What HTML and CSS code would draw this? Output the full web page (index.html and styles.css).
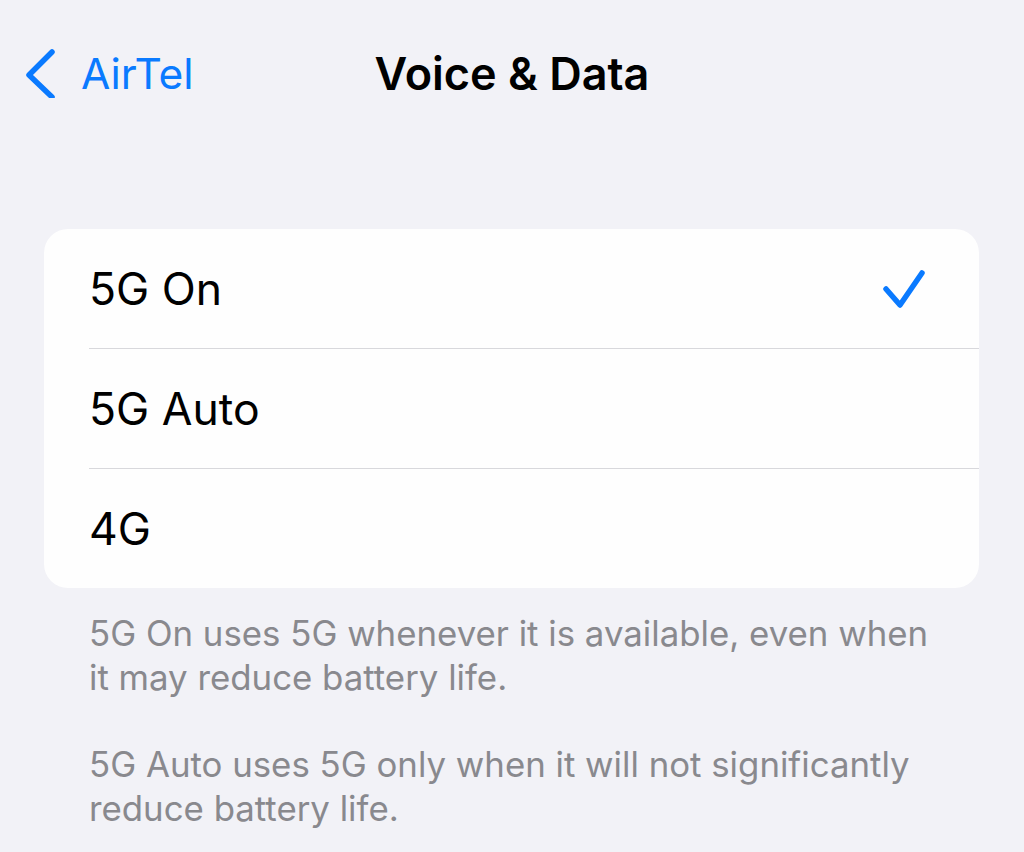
FILE: index.html
```html
<!DOCTYPE html>
<html lang="en">
<head>
    <meta charset="UTF-8">
    <meta name="viewport" content="width=device-width, initial-scale=1.0">
    <title>Voice &amp; Data</title>
    <link rel="stylesheet" href="styles.css">
</head>
<body>

    <div class="nav-bar">
        <a class="back-link" href="#">
            <svg class="back-chevron" width="34" height="50" viewBox="0 0 34 50">
                <path d="M28 4 L5 27 L28 49" fill="none" stroke="#0a7aff" stroke-width="5.5" stroke-linecap="round" stroke-linejoin="round"/>
            </svg>
            <span>AirTel</span>
        </a>
        <h1 class="nav-title">Voice &amp; Data</h1>
        <div></div>
    </div>

    <div class="settings-group">
        <div class="settings-row">
            <span>5G On</span>
            <svg class="check-mark" width="46" height="42" viewBox="0 0 46 42">
                <path d="M5 21 L19 37 L41 5" fill="none" stroke="#0a7aff" stroke-width="5.5" stroke-linecap="round" stroke-linejoin="round"/>
            </svg>
        </div>
        <div class="settings-row">
            <span>5G Auto</span>
        </div>
        <div class="settings-row">
            <span>4G</span>
        </div>
    </div>

    <div class="group-footer">
        <p>5G On uses 5G whenever it is available, even when it may reduce battery life.</p>
        <p>5G Auto uses 5G only when it will not significantly reduce battery life.</p>
    </div>

</body>
</html>
```

FILE: styles.css
```css
body {
    font-family: 'Inter', 'Liberation Sans', sans-serif;
    background-color: #f2f2f7;
    margin: 0;
    padding: 0;
    color: #000;
}

.nav-bar {
    display: grid;
    grid-template-columns: 1fr auto 1fr;
    align-items: center;
    height: 146px;
    padding: 0 24px;
}

.back-link {
    display: flex;
    align-items: center;
    gap: 23px;
    color: #0a7aff;
    text-decoration: none;
    font-size: 42.5px;
}

.nav-title {
    font-size: 45px;
    font-weight: 600;
    margin: 0;
}

.settings-group {
    margin: 83px 45px 0 44px;
    background: #fefefe;
    border-radius: 24px;
    overflow: hidden;
}

.settings-row {
    display: flex;
    align-items: center;
    justify-content: space-between;
    height: 119px;
    margin-left: 45px;
    padding-right: 52px;
    font-size: 44.5px;
    border-bottom: 1px solid #d8d8dc;
}

.settings-row:last-child {
    border-bottom: none;
}

.group-footer {
    padding: 23px 80px 0 89px;
}

.group-footer p {
    margin: 0 0 43px 0;
    font-size: 34.8px;
    line-height: 44px;
    color: #89898e;
}
```
